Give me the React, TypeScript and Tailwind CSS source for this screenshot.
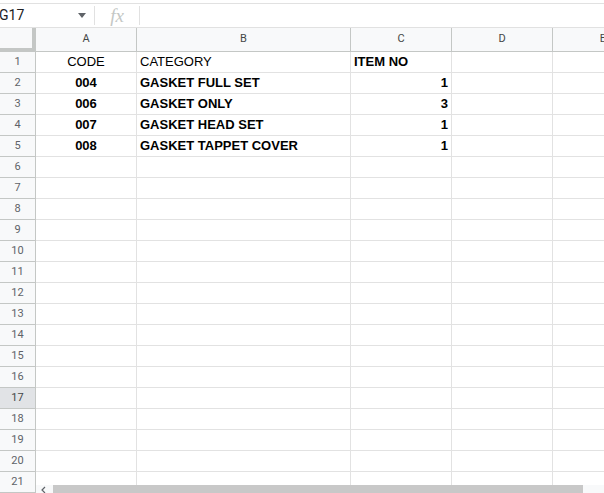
import React from "react";

const cols = [
  { key: "A", w: "w-[101px]" },
  { key: "B", w: "w-[214px]" },
  { key: "C", w: "w-[101px]" },
  { key: "D", w: "w-[101px]" },
  { key: "E", w: "w-[101px]" },
];

interface IRow {
  a: string;
  b: string;
  c: string;
  head?: boolean;
}

const data: IRow[] = [
  { a: "CODE", b: "CATEGORY", c: "ITEM NO", head: true },
  { a: "004", b: "GASKET FULL SET", c: "1" },
  { a: "006", b: "GASKET ONLY", c: "3" },
  { a: "007", b: "GASKET HEAD SET", c: "1" },
  { a: "008", b: "GASKET TAPPET COVER", c: "1" },
];

export default function App() {
  const rows = Array.from({ length: 21 }, (_, i) => i + 1);
  return (
    <div className="relative w-[604px] h-[493px] overflow-hidden bg-white font-['Liberation_Sans',Arial,sans-serif]">
      {/* FORMULA BAR */}
      <div className="mt-[3px] h-[25px] flex items-center border-t border-b border-[#e1e1e1] font-['Roboto',sans-serif]">
        <div className="w-[94px] flex items-center justify-between pr-[8px]">
          <span className="text-[14px] text-[#202124] -ml-[1px]">G17</span>
          <svg width="8" height="5" viewBox="0 0 8 5">
            <path d="M0 0 L8 0 L4 5 Z" fill="#5f6368" />
          </svg>
        </div>
        <div className="w-px h-[19px] bg-[#e1e1e1]" />
        <div className="w-[44px] flex justify-center">
          <span className="text-[19px] italic text-[#c4c7c5] font-['Liberation_Serif',serif] leading-none">
            fx
          </span>
        </div>
        <div className="w-px h-[19px] bg-[#e1e1e1]" />
      </div>

      {/* COLUMN HEADERS */}
      <div className="flex h-[24px] bg-[#f8f9fa] border-b border-[#c4c7c5]">
        <div className="w-[36px] shrink-0 border-r-[4px] border-b-[4px] border-[#c4c7c5] bg-[#f8f9fa] -mb-px" />
        {cols.map((c) => (
          <div
            key={c.key}
            className={`${c.w} shrink-0 flex items-center justify-center border-r border-[#c4c7c5] text-[11px] text-[#444746] font-['Roboto',sans-serif]`}
          >
            {c.key}
          </div>
        ))}
      </div>

      {/* ROWS */}
      {rows.map((n) => {
        const r = data[n - 1];
        return (
          <div key={n} className="flex h-[21px]">
            <div
              className={`w-[36px] shrink-0 flex items-center justify-center border-r border-b border-[#c4c7c5] text-[11px] font-['Roboto',sans-serif] ${
                n === 17 ? "bg-[#e1e3e6] text-[#444746]" : "bg-[#f8f9fa] text-[#5f6368]"
              }`}
            >
              {n}
            </div>
            <div
              className={`w-[101px] shrink-0 flex items-center justify-center border-r border-b border-[#e2e2e2] text-[13px] text-black ${
                r && !r.head ? "font-bold" : ""
              }`}
            >
              {r?.a}
            </div>
            <div
              className={`w-[214px] shrink-0 flex items-center px-[3px] border-r border-b border-[#e2e2e2] text-[13px] text-black ${
                r && !r.head ? "font-bold" : ""
              }`}
            >
              {r?.b}
            </div>
            <div
              className={`w-[101px] shrink-0 flex items-center px-[3px] border-r border-b border-[#e2e2e2] text-[13px] text-black font-bold ${
                r && !r.head ? "justify-end" : "justify-start"
              }`}
            >
              {r?.c}
            </div>
            <div className="w-[101px] shrink-0 border-r border-b border-[#e2e2e2]" />
            <div className="w-[101px] shrink-0 border-r border-b border-[#e2e2e2]" />
          </div>
        );
      })}

      {/* HORIZONTAL SCROLLBAR */}
      <div className="absolute left-[36px] right-0 bottom-0 h-[8px] bg-[#f8f9fa] flex items-center">
        <svg width="16" height="8" viewBox="0 0 16 8" className="shrink-0">
          <path d="M9 2 L6 5 L9 8" stroke="#5f6368" strokeWidth="1.2" fill="none" />
        </svg>
        <div className="ml-[1px] h-[8px] w-[530px] bg-[#c8c8c8]" />
      </div>
    </div>
  );
}
